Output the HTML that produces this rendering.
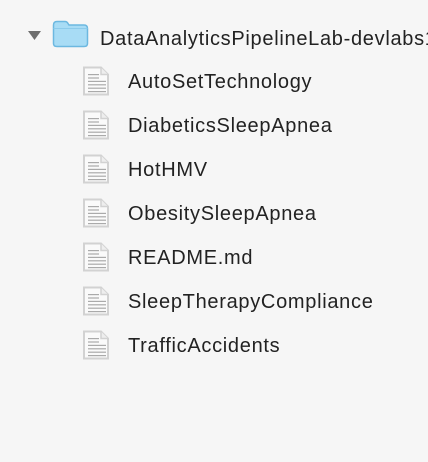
<!DOCTYPE html>
<html><head><style>
body{margin:0;width:428px;height:462px;background:#f6f6f6;overflow:hidden;font-family:"Liberation Sans",sans-serif;color:#222;}
.row{position:absolute;left:0;height:30px;white-space:nowrap;font-size:20px;letter-spacing:0.7px;}
.row span{position:absolute;top:4px;}
</style></head><body>
<svg style="position:absolute;left:28px;top:31px" width="13" height="10"><polygon points="0,0 13,0 6.5,9" fill="#6e6e6e"/></svg>
<svg style="position:absolute;left:52px;top:20px" width="37" height="28">
<path d="M1.5,5 Q1.5,1.5 5,1.5 H13 Q15,1.5 16,3.5 L17,5 H32 Q35.5,5 35.5,8.5 V23.5 Q35.5,26.5 32,26.5 H5 Q1.5,26.5 1.5,23.5 Z" fill="#a8dcf5" stroke="#6cb8e0" stroke-width="1.5"/>
<path d="M1.5,8.5 H35.5" stroke="#8ccbeb" stroke-width="1"/>
</svg>
<div class="row" style="top:24px"><span style="left:100px">DataAnalyticsPipelineLab-devlabs1</span></div>
<div id="list"></div>
<script>
var n=["AutoSetTechnology","DiabeticsSleepApnea","HotHMV","ObesitySleepApnea","README.md","SleepTherapyCompliance","TrafficAccidents"];
var h="";
n.forEach(function(t,i){var y=66+i*44;
h+='<svg style="position:absolute;left:82px;top:'+y+'px" width="28" height="30"><path d="M2,1.5 H19 L26,8.5 V28.5 H2 Z" fill="#fafafa" stroke="#d2d2d2" stroke-width="2"/><path d="M19,1.5 V8.5 H26" fill="#eee" stroke="#d2d2d2" stroke-width="1.5"/>';
for(var k=0;k<6;k++){var w=(k<2?11:18);h+='<rect x="6" y="'+(8+k*3.4)+'" width="'+w+'" height="1.2" fill="#aaa"/>';}
h+='</svg><div class="row" style="top:'+(y+1)+'px"><span style="left:128px">'+t+'</span></div>';});
document.getElementById("list").innerHTML=h;
</script>
</body></html>
